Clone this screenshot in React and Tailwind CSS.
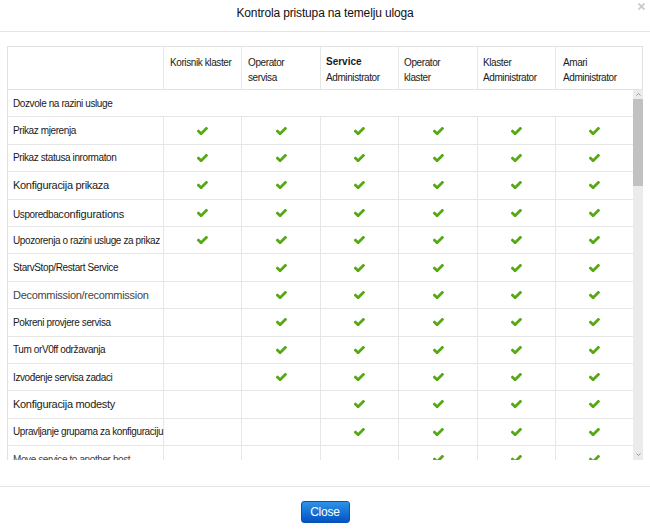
import React from "react";

const Check = () => (
  <svg width="11" height="8" viewBox="147 374 1524 1052" className="block">
    <path
      fill="#56a815"
      d="M1671 566q0 40-28 68l-724 724-136 136q-28 28-68 28t-68-28l-136-136-362-362q-28-28-28-68t28-68l136-136q28-28 68-28t68 28l294 295 656-657q28-28 68-28t68 28l136 136q28 28 28 68z"
    />
  </svg>
);

const rows = [
  { label: "Prikaz mjerenja", c: [1, 1, 1, 1, 1, 1] },
  { label: "Prikaz statusa inrormaton", c: [1, 1, 1, 1, 1, 1] },
  { label: "Konfiguracija prikaza", c: [1, 1, 1, 1, 1, 1], big: true },
  { label: "mixed", c: [1, 1, 1, 1, 1, 1] },
  { label: "Upozorenja o razini usluge za prikaz", c: [1, 1, 1, 1, 1, 1] },
  { label: "StarvStop/Restart Service", c: [0, 1, 1, 1, 1, 1] },
  { label: "Decommission/recommission", c: [0, 1, 1, 1, 1, 1], big: true, gray: true },
  { label: "Pokreni provjere servisa", c: [0, 1, 1, 1, 1, 1] },
  { label: "Tum orV0ff održavanja", c: [0, 1, 1, 1, 1, 1] },
  { label: "Izvođenje servisa zadaci", c: [0, 1, 1, 1, 1, 1] },
  { label: "Konfiguracija modesty", c: [0, 0, 1, 1, 1, 1], big: true },
  { label: "Upravljanje grupama za konfiguraciju", c: [0, 0, 1, 1, 1, 1] },
  { label: "Move service to another host", c: [0, 0, 0, 1, 1, 1], gray: true },
];

const headers = [
  ["Korisnik klaster"],
  ["Operator", "servisa"],
  ["Service", "Administrator"],
  ["Operator", "klaster"],
  ["Klaster", "Administrator"],
  ["Amari", "Administrator"],
];

const gridCols = "grid grid-cols-[156px_78px_79px_78px_79px_78px_1fr]";

function Label({ row }) {
  if (row.label === "mixed") {
    return (
      <span className="whitespace-nowrap">
        <span className="text-[10px] tracking-[-0.4px]">Usporedba</span>
        <span className="text-[11px] tracking-[-0.2px]">configurations</span>
      </span>
    );
  }
  return (
    <span
      className={
        "whitespace-nowrap " +
        (row.big ? "text-[11px] tracking-[-0.3px] " : "text-[10px] tracking-[-0.4px] ") +
        (row.gray ? "text-[#444]" : "text-[#1a1a1a]")
      }
    >
      {row.label}
    </span>
  );
}

export default function App() {
  return (
    <div className="w-[650px] h-[529px] bg-white flex flex-col font-['Liberation_Sans',Arial,sans-serif] text-[#1a1a1a] relative">
      {/* header */}
      <div className="h-[32px] border-b border-[#e5e5e5] pt-[6px] text-center text-[12px] leading-[14px] tracking-[-0.15px] text-[#111]">
        Kontrola pristupa na temelju uloga
      </div>
      <svg
        width="7"
        height="7"
        viewBox="0 0 7 7"
        className="absolute left-[638px] top-[3px]"
      >
        <path d="M0.5 0.5L6.5 6.5M6.5 0.5L0.5 6.5" stroke="#c9c9c9" strokeWidth="1.8" />
      </svg>

      {/* body */}
      <div className="h-[454px] pt-[14px] px-[7px]">
        <div className="w-[636px] h-[414px] border-l border-t border-[#e2e2e2] flex flex-col">
          {/* table header */}
          <div className={gridCols + " h-[43px] border-b border-r border-[#e2e2e2]"}>
            <div className="border-r border-[#e6e6e6]" />
            {headers.map((h, i) => (
              <div
                key={i}
                className={
                  (i < 5 ? "border-r border-[#e6e6e6] " : "") +
                  (i === 0 || i === 1 ? "pl-[6px] " : i === 5 ? "pl-[7px] " : "pl-[5px] ") +
                  "pt-[8px] text-[10px] leading-[15px] tracking-[-0.4px] text-[#1a1a1a]"
                }
              >
                {h.map((t, j) =>
                  i === 2 && j === 0 ? (
                    <div key={j} className="font-bold text-[10px] tracking-[0px] leading-[13px] pb-[2px]">
                      {t}
                    </div>
                  ) : (
                    <div key={j} className="whitespace-nowrap">
                      {t}
                    </div>
                  )
                )}
              </div>
            ))}
          </div>

          {/* table body */}
          <div className="flex h-[370px]">
            <div className="w-[625px] h-[370px] overflow-hidden">
              <div className="h-[27.4px] border-b border-[#e6e6e6] flex items-center pl-[5px]">
                <span className="text-[10px] tracking-[-0.4px] text-[#1a1a1a]">
                  Dozvole na razini usluge
                </span>
              </div>
              {rows.map((r, i) => (
                <div key={i} className={gridCols + " h-[27.4px] border-b border-[#e6e6e6]"}>
                  <div className="border-r border-[#e6e6e6] flex items-center pl-[5px]">
                    <Label row={r} />
                  </div>
                  {r.c.map((v, j) => (
                    <div
                      key={j}
                      className={
                        (j < 5 ? "border-r border-[#e6e6e6] " : "") +
                        "flex items-center justify-center"
                      }
                    >
                      {v ? <Check /> : null}
                    </div>
                  ))}
                </div>
              ))}
            </div>
            {/* scrollbar */}
            <div className="w-[10px] h-[370px] bg-[#ebebeb] flex flex-col">
              <div className="h-[9px] flex items-center justify-center">
                <svg width="5" height="3" viewBox="0 0 5 3">
                  <path d="M0.5 2.5L2.5 0.5L4.5 2.5" stroke="#9a9a9a" strokeWidth="1" fill="none" />
                </svg>
              </div>
              <div className="h-[87px] bg-[#c1c1c1]" />
              <div className="flex-1" />
              <div className="h-[11px] flex items-center justify-center">
                <svg width="5" height="3" viewBox="0 0 5 3">
                  <path d="M0.5 0.5L2.5 2.5L4.5 0.5" stroke="#9a9a9a" strokeWidth="1" fill="none" />
                </svg>
              </div>
            </div>
          </div>
        </div>
      </div>

      {/* footer */}
      <div className="flex-1 border-t border-[#e5e5e5] flex justify-center pt-[14px]">
        <button className="w-[49px] h-[22px] rounded-[3px] border border-[#0a52b5] bg-linear-to-b from-[#2f92e6] to-[#0452c6] text-white text-[12px] leading-[20px] tracking-[-0.2px] font-['Liberation_Sans',Arial,sans-serif]">
          Close
        </button>
      </div>
    </div>
  );
}
